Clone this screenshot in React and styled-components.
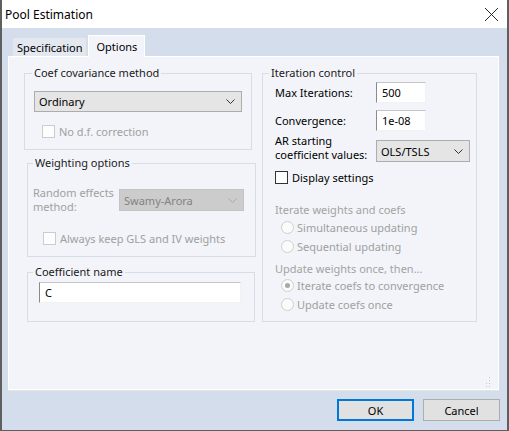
import React from 'react';
import styled, { createGlobalStyle } from 'styled-components';

const FONT = `"Noto Sans", "Open Sans", sans-serif`;

const Global = createGlobalStyle`
  html, body { margin: 0; padding: 0; background: #ffffff; }
  body { font-family: ${FONT}; font-size: 11px; color: #000; }
  * { box-sizing: border-box; }
`;

const Window = styled.div`
  width: 509px;
  height: 431px;
  display: flex;
  flex-direction: column;
  border-left: 2px solid #5f5f5f;
  border-right: 2px solid #5f5f5f;
  border-bottom: 1px solid #5f5f5f;
  background: #d4ddeb;
`;

const TitleBar = styled.div`
  height: 28px;
  flex: none;
  display: flex;
  align-items: center;
  justify-content: space-between;
  background: #ffffff;
  padding: 0 8px 0 3px;
  font-size: 12px;
  color: #000;
`;

const CloseIcon = () => (
  <svg width="15" height="15" viewBox="0 0 15 15">
    <path d="M1 1 L14 14 M14 1 L1 14" stroke="#2a2a2a" strokeWidth="1" fill="none" />
  </svg>
);

const Body = styled.div`
  flex: 1;
  display: flex;
  flex-direction: column;
  padding: 7px 8px 0 6px;
`;

const TabStrip = styled.div`
  display: flex;
  align-items: flex-end;
  padding-left: 4px;
  height: 21px;
  position: relative;
  z-index: 1;
`;

const Tab = styled.div`
  height: ${p => (p.$active ? 22 : 19)}px;
  margin-bottom: ${p => (p.$active ? -1 : 0)}px;
  padding: 0 ${p => (p.$active ? 7 : 4)}px;
  margin-left: ${p => (p.$active ? 1 : 0)}px;
  display: flex;
  align-items: center;
  background: ${p => (p.$active ? '#f2f4f9' : '#e3e8f0')};
  border: 1px solid ${p => (p.$active ? '#ffffff' : '#d9dee6')};
  border-bottom: none;
  font-size: 11px;
  color: #000;
`;

const Panel = styled.div`
  height: 334px;
  background: #f2f4f9;
  border: 1px solid #ffffff;
  box-shadow: 0 1px 0 #e1e8df;
  display: grid;
  grid-template-columns: 231px 215px;
  column-gap: 7px;
  align-items: start;
  padding: 8px 0 0 15px;
  position: relative;
`;

const Column = styled.div`
  display: flex;
  flex-direction: column;
`;

const Group = styled.fieldset`
  margin: ${p => p.$mt || 0}px 0 0 ${p => p.$ml || 0}px;
  width: ${p => p.$w}px;
  min-width: 0;
  border: 1px solid #d8dce3;
  padding: ${p => p.$pt}px ${p => p.$pr}px ${p => p.$pb}px ${p => p.$pl}px;
  & > legend {
    margin-left: ${p => (p.$lx ?? 6) - p.$pl}px;
  }
`;

const Legend = styled.legend`
  padding: 0 2px;
  line-height: 16px;
  height: 16px;
  font-size: 11px;
  color: #1a1a1a;
`;

const Dropdown = styled.div`
  width: ${p => p.$w}px;
  height: ${p => p.$h || 21}px;
  margin-top: ${p => p.$mt || 0}px;
  flex: none;
  display: flex;
  align-items: center;
  justify-content: space-between;
  padding: 0 6px 0 4px;
  background: ${p => (p.$disabled ? '#cccccc' : '#e5e5e5')};
  border: 1px solid ${p => (p.$disabled ? '#c4c4c4' : '#adadad')};
  color: ${p => (p.$disabled ? '#838383' : '#000')};
`;

const Chevron = ({ disabled }) => (
  <svg width="9" height="5" viewBox="0 0 9 5">
    <path d="M0.5 0.5 L4.5 4.5 L8.5 0.5" stroke={disabled ? '#a9a9a9' : '#333'} strokeWidth="1" fill="none" />
  </svg>
);

const CheckRow = styled.div`
  display: flex;
  align-items: center;
  gap: ${p => p.$gap || 4}px;
  height: 15px;
  margin: ${p => p.$mt || 0}px 0 0 ${p => p.$ml || 0}px;
  color: ${p => (p.$disabled ? '#a0a0a0' : '#000')};
`;

const CheckBox = styled.span`
  width: 13px;
  height: 13px;
  flex: none;
  background: ${p => (p.$disabled ? '#fdfdfd' : '#ffffff')};
  border: 1px solid ${p => (p.$disabled ? '#cccccc' : '#333333')};
`;

const FieldRow = styled.div`
  display: flex;
  align-items: ${p => p.$align || 'center'};
  margin-top: ${p => p.$mt || 0}px;
`;

const FieldLabel = styled.div`
  width: ${p => p.$w}px;
  flex: none;
  line-height: 14px;
  color: ${p => (p.$disabled ? '#a0a0a0' : '#000')};
`;

const TextInput = styled.div`
  width: ${p => p.$w}px;
  height: 21px;
  flex: none;
  display: flex;
  align-items: center;
  padding-left: ${p => p.$pl || 5}px;
  background: #ffffff;
  border-style: solid;
  border-width: 1px;
  border-color: #c4c4c4 #f2f2f2 #f2f2f2 #8a8a8a;
  color: #000;
`;

const Caption = styled.div`
  line-height: 15px;
  margin-top: ${p => p.$mt || 0}px;
  color: #a3a3a3;
`;

const RadioList = styled.div`
  display: flex;
  flex-direction: column;
  gap: 1px;
  margin-top: ${p => p.$mt || 0}px;
  padding-left: 6px;
`;

const RadioRow = styled.div`
  display: flex;
  align-items: center;
  gap: 3px;
  height: 18px;
  color: #a0a0a0;
`;

const Radio = styled.span`
  width: 13px;
  height: 13px;
  flex: none;
  border-radius: 50%;
  border: 1px solid #cfcfcf;
  background: #fbfbfb;
  display: flex;
  align-items: center;
  justify-content: center;
  &::after {
    content: '';
    display: ${p => (p.$checked ? 'block' : 'none')};
    width: 5px;
    height: 5px;
    border-radius: 50%;
    background: #a8a8a8;
  }
`;

const Grip = styled.svg`
  position: absolute;
  right: 7px;
  bottom: 2px;
`;

const ButtonRow = styled.div`
  display: flex;
  justify-content: flex-end;
  gap: 9px;
  margin: 9px -1px 0 0;
`;

const Button = styled.button`
  width: 77px;
  height: 22px;
  font-family: ${FONT};
  font-size: 11px;
  color: #000;
  background: #e1e1e1;
  border: 1px solid ${p => (p.$default ? '#0078d7' : '#adadad')};
  box-shadow: ${p => (p.$default ? 'inset 0 0 0 1px #0078d7' : 'none')};
  padding: 0;
`;

export default function App() {
  return (
    <>
      <Global />
      <Window>
        <TitleBar>
          <span>Pool Estimation</span>
          <CloseIcon />
        </TitleBar>
        <Body>
          <TabStrip>
            <Tab>Specification</Tab>
            <Tab $active>Options</Tab>
          </TabStrip>
          <Panel>
            <Column>
              <Group $w={228} $pt={10} $pr={9} $pb={10} $pl={9} $lx={7}>
                <Legend>Coef covariance method</Legend>
                <Dropdown $w={208}>
                  <span>Ordinary</span>
                  <Chevron />
                </Dropdown>
                <CheckRow $disabled $mt={12} $ml={8}>
                  <CheckBox $disabled />
                  <span>No d.f. correction</span>
                </CheckRow>
              </Group>
              <Group $w={229} $ml={3} $mt={5} $pt={15} $pr={10} $pb={10} $pl={5} $lx={5}>
                <Legend>Weighting options</Legend>
                <FieldRow>
                  <FieldLabel $w={86} $disabled>
                    Random effects
                    <br />
                    method:
                  </FieldLabel>
                  <Dropdown $w={125} $h={22} $disabled>
                    <span>Swamy-Arora</span>
                    <Chevron disabled />
                  </Dropdown>
                </FieldRow>
                <CheckRow $disabled $mt={17} $ml={10} $gap={4}>
                  <CheckBox $disabled />
                  <span>Always keep GLS and IV weights</span>
                </CheckRow>
              </Group>
              <Group $w={228} $ml={3} $mt={7} $pt={2} $pr={10} $pb={18} $pl={11} $lx={5}>
                <Legend>Coefficient name</Legend>
                <TextInput $w={202}>C</TextInput>
              </Group>
            </Column>
            <Column>
              <Group $w={215} $pt={1} $pr={5} $pb={8} $pl={12} $lx={6}>
                <Legend>Iteration control</Legend>
                <FieldRow>
                  <FieldLabel $w={101}>Max Iterations:</FieldLabel>
                  <TextInput $w={50}>500</TextInput>
                </FieldRow>
                <FieldRow $mt={7}>
                  <FieldLabel $w={101}>Convergence:</FieldLabel>
                  <TextInput $w={50}>1e-08</TextInput>
                </FieldRow>
                <FieldRow $mt={3} $align="flex-start">
                  <FieldLabel $w={101}>
                    AR starting
                    <br />
                    coefficient values:
                  </FieldLabel>
                  <Dropdown $w={94} $h={22} $mt={6}>
                    <span>OLS/TSLS</span>
                    <Chevron />
                  </Dropdown>
                </FieldRow>
                <CheckRow $mt={8} $gap={4}>
                  <CheckBox />
                  <span>Display settings</span>
                </CheckRow>
                <Caption $mt={17}>Iterate weights and coefs</Caption>
                <RadioList $mt={1}>
                  <RadioRow>
                    <Radio />
                    <span>Simultaneous updating</span>
                  </RadioRow>
                  <RadioRow>
                    <Radio />
                    <span>Sequential updating</span>
                  </RadioRow>
                </RadioList>
                <Caption $mt={6}>Update weights once, then...</Caption>
                <RadioList>
                  <RadioRow>
                    <Radio $checked />
                    <span>Iterate coefs to convergence</span>
                  </RadioRow>
                  <RadioRow>
                    <Radio />
                    <span>Update coefs once</span>
                  </RadioRow>
                </RadioList>
              </Group>
            </Column>
            <Grip width="5" height="10" viewBox="0 0 5 10">
              <rect x="3" y="0" width="1" height="1" fill="#c8c8c8" />
              <rect x="3" y="3" width="1" height="1" fill="#c8c8c8" />
              <rect x="0" y="6" width="1" height="1" fill="#c8c8c8" />
              <rect x="3" y="6" width="1" height="1" fill="#c8c8c8" />
              <rect x="0" y="9" width="1" height="1" fill="#c8c8c8" />
              <rect x="3" y="9" width="1" height="1" fill="#c8c8c8" />
            </Grip>
          </Panel>
          <ButtonRow>
            <Button $default>OK</Button>
            <Button>Cancel</Button>
          </ButtonRow>
        </Body>
      </Window>
    </>
  );
}
